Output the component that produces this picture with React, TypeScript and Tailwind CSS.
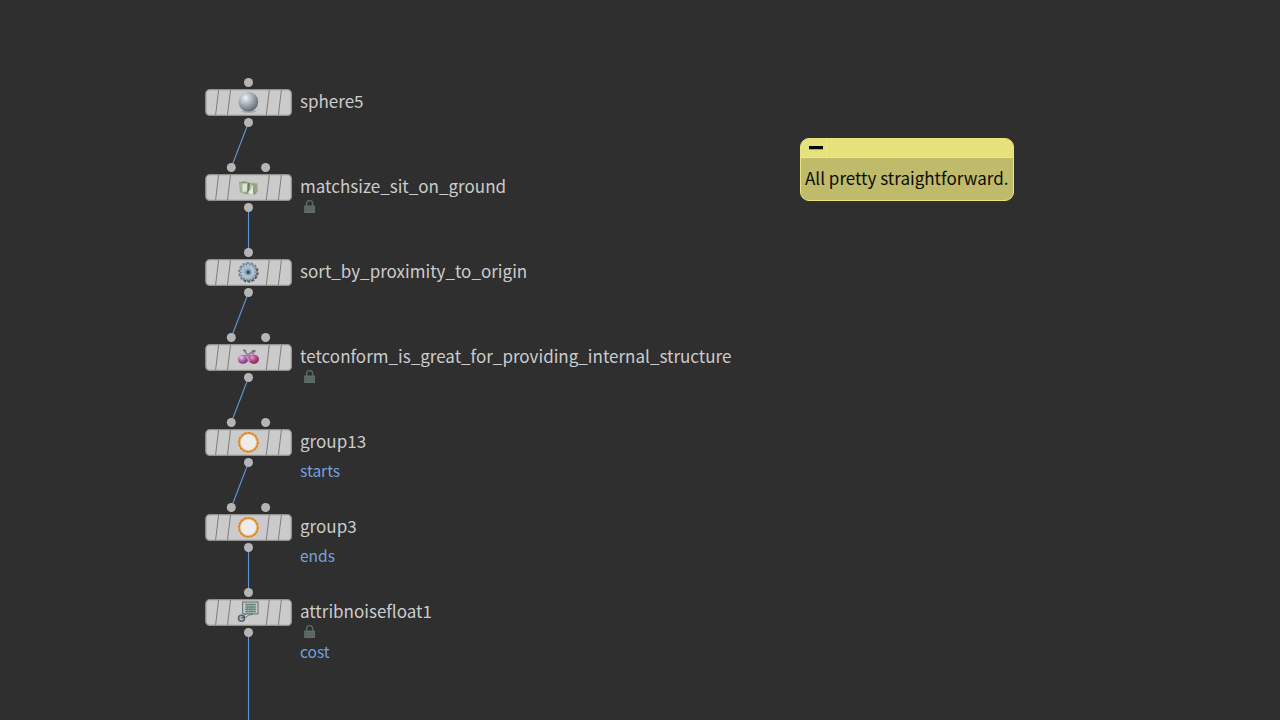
import React from "react";

type IconKind = "sphere" | "match" | "sort" | "tet" | "group" | "noise";

interface GraphNode {
  name: string;
  y: number;
  icon: IconKind;
  inputs: number[];
  locked?: boolean;
  output?: string;
}

const nodes: GraphNode[] = [
  { name: "sphere5", y: 77, icon: "sphere", inputs: [43.5] },
  { name: "matchsize_sit_on_ground", y: 162, icon: "match", inputs: [26.3, 60.6], locked: true },
  { name: "sort_by_proximity_to_origin", y: 247, icon: "sort", inputs: [43.5] },
  { name: "tetconform_is_great_for_providing_internal_structure", y: 332, icon: "tet", inputs: [26.3, 60.6], locked: true },
  { name: "group13", y: 417, icon: "group", inputs: [26.3, 60.6], output: "starts" },
  { name: "group3", y: 502, icon: "group", inputs: [26.3, 60.6], output: "ends" },
  { name: "attribnoisefloat1", y: 587, icon: "noise", inputs: [43.5], locked: true, output: "cost" },
];

const teeth = Array.from({ length: 14 }, (_, i) => (i * 360) / 14);

function NodeIcon({ kind }: { kind: IconKind }) {
  switch (kind) {
    case "sphere":
      return (
        <g>
          <ellipse cx="11.5" cy="20" rx="7.5" ry="1.6" fill="#8d8d8d" opacity=".55" />
          <circle cx="11" cy="10.5" r="9.8" fill="url(#ball)" />
        </g>
      );
    case "match":
      return (
        <g>
          <path d="M1.4 5.6 7 4.8 11 5.8 20 6.4 20.6 15.5 19 18.8 10 18.4 2.6 16.4Z" fill="#b9c5ae" />
          <path d="M1.6 6 4.2 5.6 4.8 16.2 2.6 15.6Z" fill="#a0ae95" />
          <path d="M5.2 8 9.8 7.6v7.2l-4.4.6Z" fill="#dbe5d2" />
          <path d="M1.6 6 7 4.9l4.6 1.1-6 1.3Z" fill="#8b9c7f" />
          <path d="M10.2 6.2 12.4 7 12 13.6 9.8 16.4Z" fill="#66785b" />
          <path d="M12.4 6.6 19.8 7.2l.6 8.2-2 1-5.4-1Z" fill="#93a587" />
          <path d="M13.2 8.2 15 8.4 12.8 12.8Z" fill="#cbd8c0" />
          <path d="M5 16.2 11 15.4v2.6l-5-.8Z" fill="#93a286" />
          <path d="M15.4 8.6 19.2 17 15.8 18.6 11 16.8Z" fill="#e6e9e4" />
          <path d="m15.4 8.6 3.8 8.4-3.4 1.6Z" fill="#8a9389" />
        </g>
      );
    case "sort":
      return (
        <g>
          {teeth.map((a) => (
            <path
              key={a}
              d="M9.2 3.2 9 .4 12.2 1.2 12.4 3.2Z"
              fill={a > 70 && a < 230 ? "#4f6170" : "#74899a"}
              transform={`rotate(${a} 11 11)`}
            />
          ))}
          <circle cx="11" cy="11" r="8.2" fill="url(#gear)" />
          {teeth.map((a) => (
            <path key={a} d="M11 2.6v1.5" stroke="#566c7e" strokeWidth=".8" transform={`rotate(${a + 12} 11 11)`} />
          ))}
          <circle cx="11" cy="11" r="3.1" fill="#809aad" />
          <circle cx="10.8" cy="11" r="1.7" fill="#324c62" />
        </g>
      );
    case "tet":
      return (
        <g>
          <path d="M7.2 4.4 10 8.6 6 10.6M10 8.6l5-3 3-.2M15.4 6l.8 5" fill="none" stroke="#9a7da0" strokeWidth="1.8" />
          <path d="M5.8 3.8 8.6 4.6M14.6 4.8l3.4-.2" stroke="#766480" strokeWidth="1.6" />
          <path d="M8.4 9 14 8.4 12.6 15.4 8.6 15Z" fill="#a579a8" />
          <ellipse cx="5.5" cy="13" rx="5.1" ry="4.5" fill="url(#plum)" />
          <ellipse cx="16.4" cy="13" rx="5.2" ry="4.6" fill="url(#berry)" />
          <path d="m8.6 9.6 3.4 5.2" stroke="#cfa7d1" strokeWidth="1.1" />
        </g>
      );
    case "group":
      return (
        <g>
          <circle cx="11" cy="11" r="9.2" fill="#eeeceb" stroke="#ecc592" strokeWidth="3" />
          <circle cx="11" cy="11" r="9.5" fill="none" stroke="#dc9540" strokeWidth="1.8" />
          <circle cx="11" cy="11" r="9.5" fill="none" stroke="#c0772a" strokeWidth="1.5" strokeDasharray="1.5 2.2" opacity=".6" />
        </g>
      );
    case "noise":
      return (
        <g>
          <rect x="5.2" y=".7" width="15.4" height="11.9" fill="#bccbc7" stroke="#697778" strokeWidth="1.1" />
          <path d="M8 3.2h10.4M8 5.6h10.4M8 8h10.4M8 10.2h10.4" stroke="#5c7a73" strokeWidth="1.5" strokeDasharray="2.1 .7" />
          <path d="M10.2 2.4v8.8M13 2.4v8.8M15.8 2.4v8.8" stroke="#68877e" strokeWidth=".8" />
          <path d="M5 15 8.8 12.8 15.6 12.8 11 14 6.4 17.2Z" fill="#cdd8d7" stroke="#6a777b" strokeWidth="1" />
          <circle cx="4.1" cy="16.9" r="3" fill="#adb9be" stroke="#59656c" strokeWidth="1.6" />
          <path d="m4 17 3.4-1.8" stroke="#465158" strokeWidth="1.2" />
        </g>
      );
  }
}

function Gradients() {
  return (
    <defs>
      <radialGradient id="ball" cx=".36" cy=".3" r=".72">
        <stop offset="0" stopColor="#f3f5f6" />
        <stop offset=".3" stopColor="#c2c9ce" />
        <stop offset=".7" stopColor="#87939c" />
        <stop offset="1" stopColor="#5b6872" />
      </radialGradient>
      <radialGradient id="gear" cx=".42" cy=".42" r=".6">
        <stop offset="0" stopColor="#93adc0" />
        <stop offset=".6" stopColor="#b4c6d2" />
        <stop offset="1" stopColor="#8da2b1" />
      </radialGradient>
      <radialGradient id="plum" cx=".35" cy=".3" r=".75">
        <stop offset="0" stopColor="#e6cbe8" />
        <stop offset=".45" stopColor="#b070b0" />
        <stop offset="1" stopColor="#6d2f6e" />
      </radialGradient>
      <radialGradient id="berry" cx=".35" cy=".3" r=".75">
        <stop offset="0" stopColor="#dd9fce" />
        <stop offset=".5" stopColor="#b6447f" />
        <stop offset="1" stopColor="#852a60" />
      </radialGradient>
    </defs>
  );
}

function NodeBody({ node }: { node: GraphNode }) {
  return (
    <svg width="88" height="50" viewBox="0 0 88 50" className="block shrink-0">
      <Gradients />
      <rect x=".8" y="12.7" width="85.6" height="25.7" rx="4" fill="#cbcbcb" stroke="#919191" strokeWidth="1.3" />
      <path d="M13.6 13 10.6 38M25.5 13 22.5 38M64.3 13 61.3 38M76.4 13 73.4 38" stroke="#7d7d7d" strokeWidth="1" />
      {node.inputs.map((x) => (
        <circle key={x} cx={x} cy="5.5" r="4.5" fill="#b5b5b5" />
      ))}
      <circle cx="43.5" cy="45.5" r="4.5" fill="#b5b5b5" />
      <g transform="translate(32.4 14.3)">
        <NodeIcon kind={node.icon} />
      </g>
    </svg>
  );
}

function Lock() {
  return (
    <svg width="12" height="14" viewBox="0 0 12 14" className="block">
      <path d="M2.6 6V3.6a3 3 0 0 1 6 0V6" fill="none" stroke="#5c6865" strokeWidth="1.4" />
      <rect x=".1" y="5.4" width="11" height="7.6" rx=".4" fill="#5f6c68" />
      <path d="M.5 8h10.2M.5 10.4h10.2" stroke="#525e5b" strokeWidth=".7" />
    </svg>
  );
}

function NetworkNode({ node }: { node: GraphNode }) {
  return (
    <div className="absolute left-[205px] flex" style={{ top: node.y }}>
      <NodeBody node={node} />
      <div className="ml-[7px] flex flex-col whitespace-nowrap pt-[10px]">
        <div className="h-7 text-[17.02px] leading-7 text-[#cccccc]">{node.name}</div>
        {node.locked && (
          <div className="h-[14px] pl-[3.5px]">
            <Lock />
          </div>
        )}
        {node.output && (
          <div className={node.locked ? "text-[15.5px] leading-6 text-[#74a2dd]" : "mt-[3px] text-[15.5px] leading-6 text-[#74a2dd]"}>
            {node.output}
          </div>
        )}
      </div>
    </div>
  );
}

function StickyNote() {
  return (
    <div className="absolute left-[800px] top-[138px] flex h-[62.5px] w-[213.5px] flex-col overflow-hidden rounded-[9px] border border-[#ebe580] bg-[#c0bb6b]">
      <div className="flex h-[19px] shrink-0 border-b border-[#efe985] bg-[#e7e17b]">
        <div className="flex w-[26px] justify-center border-r border-[#efe985] pt-[7px] pl-[5px]">
          <div className="h-[3px] w-[14px] bg-black shadow-[0_1px_0_#aaa67b]" />
        </div>
      </div>
      <div className="whitespace-nowrap pl-1 pt-[6px] text-[17.05px] leading-7 text-[#0c0c08]">All pretty straightforward.</div>
    </div>
  );
}

export default function App() {
  return (
    <main className="relative h-[720px] w-[1280px] overflow-hidden bg-[#2f2f2f] font-['Noto_Sans_CJK_SC','Noto_Sans',sans-serif]">
      <svg width="1280" height="720" className="absolute inset-0">
        <path
          d="M248.5 122.5 231.3 167.5M248.5 207.5V252.5M248.5 292.5 231.3 337.5M248.5 377.5 231.3 422.5M248.5 462.5 231.3 507.5M248.5 547.5V592.5M248.5 632.5V720"
          fill="none"
          stroke="#5f98d8"
          strokeWidth="1.1"
        />
      </svg>
      {nodes.map((node) => (
        <NetworkNode key={node.name} node={node} />
      ))}
      <StickyNote />
    </main>
  );
}
